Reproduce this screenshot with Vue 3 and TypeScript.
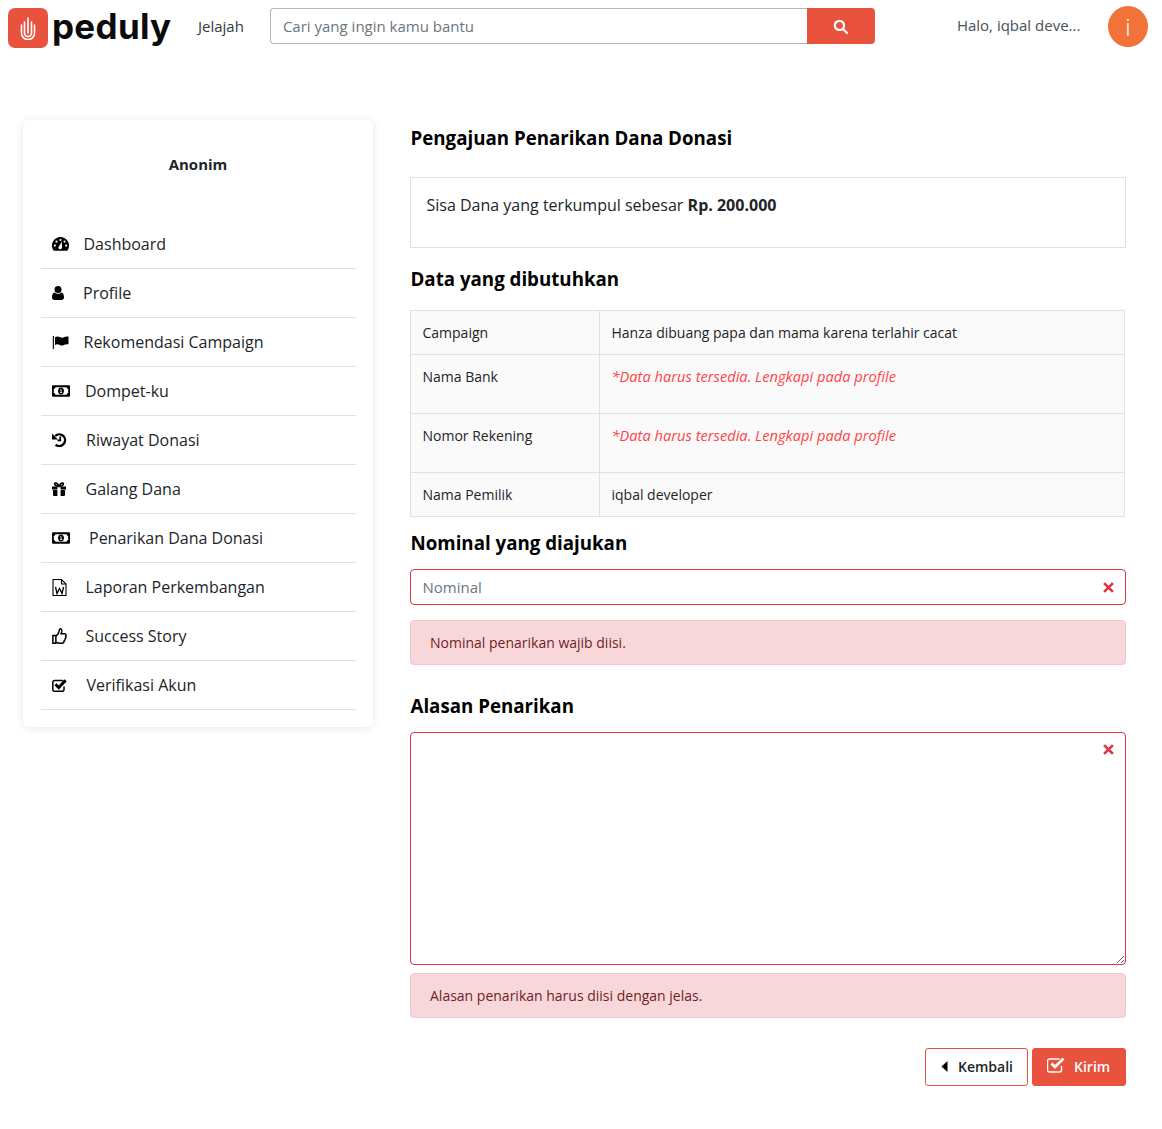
<script setup lang="ts">
const menu = [
  { label: 'Dashboard', icon: 'gauge', gap: 14.5 },
  { label: 'Profile', icon: 'user', gap: 19 },
  { label: 'Rekomendasi Campaign', icon: 'flag', gap: 14.5 },
  { label: 'Dompet-ku', icon: 'money', gap: 15 },
  { label: 'Riwayat Donasi', icon: 'history', gap: 19 },
  { label: 'Galang Dana', icon: 'gift', gap: 19.5 },
  { label: 'Penarikan Dana Donasi', icon: 'money', gap: 19 },
  { label: 'Laporan Perkembangan', icon: 'word', gap: 18.5 },
  { label: 'Success Story', icon: 'thumb', gap: 18.5 },
  { label: 'Verifikasi Akun', icon: 'check', gap: 19.5 },
]
</script>

<template>
  <div class="page">
    <header class="topbar">
      <div class="logo-mark">
        <svg width="16" height="24" viewBox="0 0 16 24" fill="none" stroke="#fff" stroke-width="1.6" stroke-linecap="round">
          <path d="M1.5 9v8a6.5 6.5 0 0 0 13 0V9" />
          <path d="M4.5 6v11a3.5 3.5 0 0 0 7 0V6" />
          <path d="M8 2v15" />
        </svg>
      </div>
      <span class="logo-text">peduly</span>
      <a class="explore">Jelajah</a>
      <div class="search">
        <input class="search-input" placeholder="Cari yang ingin kamu bantu" />
        <button class="search-btn">
          <svg width="15" height="15" viewBox="0 0 15 15" fill="none" stroke="#fff" stroke-width="2.2">
            <circle cx="6.400" cy="6.400" r="4.600" />
            <path d="M10 10l4 4" stroke-linecap="round" />
          </svg>
        </button>
      </div>
      <span class="greeting">Halo, iqbal deve...</span>
      <div class="avatar">i</div>
    </header>

    <div class="content">
      <aside class="sidebar">
        <div class="name">Anonim</div>
        <ul class="menu">
          <li v-for="item in menu" :key="item.label" class="menu-item">
            <span class="menu-icon">
              <svg v-if="item.icon === 'gauge'" width="17" height="14" viewBox="0 0 17 14">
                <path fill="#000" fill-rule="evenodd" d="M8.500 0a8.500 8.500 0 0 1 7.400 12.700l-.7 1.100H1.800l-.7-1.100A8.500 8.500 0 0 1 8.500 0zM8.500 1.900a1.100 1.100 0 1 0 0 2.200 1.100 1.100 0 0 0 0-2.200zM4.500 3.500a1.100 1.100 0 1 0 0 2.200 1.100 1.100 0 0 0 0-2.200zM2.900 7.500a1.100 1.100 0 1 0 0 2.200 1.100 1.100 0 0 0 0-2.200zM14.100 7.500a1.100 1.100 0 1 0 0 2.200 1.100 1.100 0 0 0 0-2.200zM12.500 3.500a1.100 1.100 0 1 0 0 2.200 1.100 1.100 0 0 0 0-2.200zM9.800 4.400L7.200 9a1.800 1.800 0 1 0 2.800 1.300z" />
              </svg>
              <svg v-else-if="item.icon === 'user'" width="12" height="14" viewBox="0 0 12 14">
                <circle cx="6" cy="3.500" r="3.500" fill="#000" />
                <path fill="#000" d="M2.600 6.400C3.400 7.300 4.600 7.800 6 7.800s2.600-.5 3.400-1.400C11 6.600 12 8.600 12 11.200c0 1.700-1 2.800-2.500 2.800h-7C1 14 0 12.900 0 11.200 0 8.600 1 6.600 2.600 6.400z" />
              </svg>
              <svg v-else-if="item.icon === 'flag'" width="17" height="13" viewBox="0 0 17 13">
                <path fill="#000" d="M.8 0h1.100v13H.8z" />
                <path fill="#000" d="M3 1.300c1.600-1 3.200-1 4.800-.2s2.800.9 4 .1c1-.6 2.500-1 4.700-.7v7.800c-2.200-.3-3.700.1-4.700.7-1.200.8-2.400.7-4-.1S4.600 7.900 3 8.900z" />
              </svg>
              <svg v-else-if="item.icon === 'money'" width="18" height="12" viewBox="0 0 18 12">
                <path fill="#000" fill-rule="evenodd" d="M1 .3h16a1 1 0 0 1 1 1v9.400a1 1 0 0 1-1 1H1a1 1 0 0 1-1-1V1.300a1 1 0 0 1 1-1zM3.500 2.300A2 2 0 0 1 1.800 4v4a2 2 0 0 1 1.700 1.700h11a2 2 0 0 1 1.700-1.700V4a2 2 0 0 1-1.700-1.700z" />
                <path fill="#000" fill-rule="evenodd" d="M9 2.500c1.800 0 3 1.600 3 3.500s-1.200 3.500-3 3.500S6 7.900 6 6s1.200-3.500 3-3.500zM8 4.500v.7h.7v2H8v.7h2.200v-.7h-.7V4.500z" />
              </svg>
              <svg v-else-if="item.icon === 'history'" width="15" height="14" viewBox="0 0 15 14" fill="none">
                <path stroke="#000" stroke-width="2.400" d="M3.200 3A5.800 5.800 0 1 1 3.600 11.700" />
                <path fill="#000" d="M0 .6l6 6H0z" />
                <path stroke="#000" stroke-width="1.800" d="M8.200 3.600v3.800H5.500" />
              </svg>
              <svg v-else-if="item.icon === 'gift'" width="14" height="14" viewBox="0 0 14 14">
                <path fill="#000" d="M0 4.500h5.400v2.900H0zM8.600 4.500H14v2.900H8.600zM1 8h4.400v6H2a1 1 0 0 1-1-1zM8.600 8H13v5a1 1 0 0 1-1 1H8.600z" />
                <path fill="none" stroke="#000" stroke-width="1.600" d="M7 4.200C5.700 1.200 3.200.2 2.700 1.600 2.300 3 4 4.200 7 4.200c3 0 4.700-1.200 4.300-2.600C10.800.2 8.300 1.200 7 4.200z" />
              </svg>
              <svg v-else-if="item.icon === 'word'" width="15" height="17" viewBox="0 0 15 17" fill="none" stroke="#000" stroke-width="1.100">
                <path d="M1 .5h8.500l4.500 4.500v11.500H1z" />
                <path d="M9.500.5v4.500H14" />
                <path stroke-width="1.300" d="M3.500 8l1.500 6.500 2.500-5 2.500 5 1.500-6.500" />
              </svg>
              <svg v-else-if="item.icon === 'thumb'" width="15" height="16" viewBox="0 0 14 15" fill="none" stroke="#000" stroke-width="1.400">
                <path d="M.8 7h2.800v7.200H.8z" />
                <path d="M3.600 7.500c1.500-.6 2.400-2.500 3-4.500.2-1 .2-2.300 1-2.300 1.300 0 1.800 1.500 1.500 2.800l-.6 2h3.200c1.700 0 1.800 1.800 1 2.400.5 1 .2 1.800-.5 2.200.2 1-.2 1.700-.9 2 0 1.200-.8 2.100-2 2.100H7c-1.500 0-2.200-.7-3.400-.7" />
              </svg>
              <svg v-else width="15" height="13" viewBox="0 0 15 13" fill="none" stroke="#000">
                <path stroke-width="1.500" d="M12 7.500v3a1.800 1.800 0 0 1-1.800 1.800H2.600A1.800 1.800 0 0 1 .8 10.500V3.200a1.800 1.800 0 0 1 1.800-1.800h7.600c.4 0 .7.100 1 .2" />
                <path stroke-width="3" d="M3.500 5.300l3.200 3.200 7-7.200" />
              </svg>
            </span>
            <span :style="{ marginLeft: item.gap + 'px' }">{{ item.label }}</span>
          </li>
        </ul>
      </aside>

      <main class="main">
        <h2 class="title first">Pengajuan Penarikan Dana Donasi</h2>
        <div class="balance">Sisa Dana yang terkumpul sebesar <b>Rp. 200.000</b></div>

        <h2 class="title needed">Data yang dibutuhkan</h2>
        <table class="data">
          <tbody>
            <tr>
              <td class="key">Campaign</td>
              <td>Hanza dibuang papa dan mama karena terlahir cacat</td>
            </tr>
            <tr class="tall">
              <td class="key">Nama Bank</td>
              <td><em>*Data harus tersedia. Lengkapi pada profile</em></td>
            </tr>
            <tr class="tall">
              <td class="key">Nomor Rekening</td>
              <td><em>*Data harus tersedia. Lengkapi pada profile</em></td>
            </tr>
            <tr>
              <td class="key">Nama Pemilik</td>
              <td>iqbal developer</td>
            </tr>
          </tbody>
        </table>

        <h2 class="title nominal">Nominal yang diajukan</h2>
        <div class="field">
          <input class="control" placeholder="Nominal" />
          <svg class="invalid" width="11" height="11" viewBox="0 0 10 10" stroke="#dc3545" stroke-width="2.400">
            <path d="M1 1l8 8M9 1l-8 8" />
          </svg>
        </div>
        <div class="alert first-alert">Nominal penarikan wajib diisi.</div>

        <h2 class="title reason">Alasan Penarikan</h2>
        <div class="field area">
          <textarea class="control text"></textarea>
          <svg class="invalid" width="11" height="11" viewBox="0 0 10 10" stroke="#dc3545" stroke-width="2.400">
            <path d="M1 1l8 8M9 1l-8 8" />
          </svg>
        </div>
        <div class="alert second-alert">Alasan penarikan harus diisi dengan jelas.</div>

        <div class="actions">
          <button class="btn back">
            <svg width="7" height="11" viewBox="0 0 7 11"><path fill="#000" d="M6.500 0v11L.5 5.500z" /></svg>
            <span>Kembali</span>
          </button>
          <button class="btn send">
            <svg class="send-icon" width="18" height="16" viewBox="0 0 18 16" fill="none" stroke="#fff">
              <path stroke-width="1.400" d="M14.500 9v4a2 2 0 0 1-2 2h-10a2 2 0 0 1-2-2V4a2 2 0 0 1 2-2h10" />
              <path stroke-width="2.800" d="M4.500 6.500l3.500 3.500 8.500-8.500" />
            </svg>
            <span>Kirim</span>
          </button>
        </div>
      </main>
    </div>
  </div>
</template>

<style>
html,
body {
  background: #fff;
}
</style>

<style scoped>
.page {
  font-family: "Open Sans", "Liberation Sans", sans-serif;
  color: #212529;
  font-size: 16px;
  height: 1129px;
  overflow: hidden;
}

.topbar {
  display: flex;
  align-items: flex-start;
  height: 120px;
  padding-left: 8px;
  box-sizing: border-box;
}

.logo-mark {
  width: 40px;
  height: 40px;
  margin-top: 8px;
  background: #e9533d;
  border-radius: 7px;
  display: flex;
  align-items: center;
  justify-content: center;
}

.logo-text {
  margin-left: 4px;
  margin-top: 1px;
  font-family: Inter, "Liberation Sans", sans-serif;
  font-weight: 700;
  font-size: 35px;
  letter-spacing: 0.3px;
  line-height: 50px;
  width: 122px;
  color: #0b0b0b;
}

.explore {
  margin-left: 24px;
  margin-top: 15px;
  font-size: 15px;
  line-height: 22px;
  color: #343a40;
}

.search {
  display: flex;
  margin-left: 26px;
  margin-top: 8px;
  width: 605px;
  height: 36px;
}

.search-input {
  flex: 1;
  min-width: 0;
  box-sizing: border-box;
  border: 1px solid #b5b5b5;
  border-right: 0;
  border-radius: 4px 0 0 4px;
  padding: 0 12px;
  font: 15px "Open Sans", sans-serif;
  color: #495057;
  outline: none;
}

.search-input::placeholder,
.control::placeholder {
  color: #6c757d;
  opacity: 1;
}

.search-btn {
  width: 68px;
  border: 0;
  border-radius: 0 4px 4px 0;
  background: #e9533d;
  display: flex;
  align-items: center;
  justify-content: center;
  padding: 0 1px 0 0;
}

.greeting {
  margin-left: 82px;
  margin-top: 14px;
  width: 151px;
  font-size: 15px;
  line-height: 22px;
  color: #495057;
}

.avatar {
  width: 40px;
  height: 41px;
  margin-top: 6px;
  border-radius: 50%;
  background: #f27339;
  color: #fff;
  font-size: 24px;
  font-weight: 300;
  line-height: 41px;
  text-align: center;
}

.content {
  display: flex;
  align-items: flex-start;
  padding-left: 23px;
}

.sidebar {
  width: 350px;
  height: 607px;
  box-sizing: border-box;
  padding: 0 17px 0 18px;
  background: #fff;
  border-radius: 6px;
  box-shadow: 0 1px 8px rgba(0, 0, 0, 0.1);
}

.name {
  padding-top: 34px;
  padding-right: 1px;
  height: 100px;
  box-sizing: border-box;
  text-align: center;
  font-size: 15px;
  font-weight: 700;
  line-height: 20px;
}

.menu {
  list-style: none;
  margin: 0;
  padding: 0;
}

.menu-item {
  height: 49px;
  box-sizing: border-box;
  border-bottom: 1px solid #dee2e6;
  display: flex;
  align-items: center;
  padding-left: 11px;
  line-height: 48px;
}

.menu-icon {
  display: flex;
  align-items: center;
}

.main {
  margin-left: 37px;
  width: 716px;
}

.title {
  margin: 0;
  padding-left: 0.5px;
  font-size: 18.72px;
  line-height: 28px;
  font-weight: 700;
  color: #000;
}

.first {
  margin-top: 4px;
}

.balance {
  margin-top: 25px;
  height: 71px;
  box-sizing: border-box;
  border: 1px solid #dee2e6;
  padding: 15px 15.5px;
  line-height: 24px;
}

.needed {
  margin-top: 17px;
}

.data {
  margin-top: 17px;
  width: 715px;
  border-collapse: collapse;
  background: #fafafa;
  font-size: 14px;
  line-height: 21px;
  table-layout: fixed;
}

.data td {
  border: 1px solid #dee2e6;
  padding: 11px 11.5px;
  vertical-align: top;
}

.data .key {
  width: 165px;
}

.tall td {
  padding-bottom: 26px;
}

.data em {
  color: #f44;
  font-size: 14.67px;
}

.nominal {
  margin-top: 12px;
}

.field {
  position: relative;
  margin-top: 12px;
}

.control {
  display: block;
  width: 100%;
  height: 36px;
  box-sizing: border-box;
  border: 1px solid #dc3545;
  border-radius: 4px;
  padding: 0 11.5px;
  font: 15px "Open Sans", sans-serif;
  outline: none;
}

.text {
  height: 233px;
  padding: 6px 12px;
  resize: vertical;
}

.invalid {
  position: absolute;
  right: 12px;
  top: 13px;
}

.area .invalid {
  top: 12px;
}

.alert {
  height: 45px;
  box-sizing: border-box;
  background: #f8d7da;
  border: 1px solid #f5c6cb;
  border-radius: 4px;
  padding: 0 19px;
  color: #721c24;
  font-size: 14px;
  line-height: 44px;
}

.first-alert {
  margin-top: 15px;
}

.reason {
  margin-top: 27px;
}

.second-alert {
  margin-top: 8px;
}

.actions {
  margin-top: 30px;
  display: flex;
  justify-content: flex-end;
  gap: 4px;
}

.btn {
  height: 38px;
  box-sizing: border-box;
  border-radius: 3px;
  font: 600 14px "Open Sans", sans-serif;
  display: flex;
  align-items: center;
  padding: 0 0 2px;
}

.back {
  width: 103px;
  background: #fff;
  border: 1px solid #e9533d;
  color: #212529;
  padding-left: 15px;
  gap: 10px;
}

.send {
  width: 94px;
  background: #e9533d;
  border: 1px solid #e9533d;
  color: #fff;
  padding-left: 14px;
  gap: 9px;
}

.send-icon {
  margin-bottom: 2px;
}
</style>
